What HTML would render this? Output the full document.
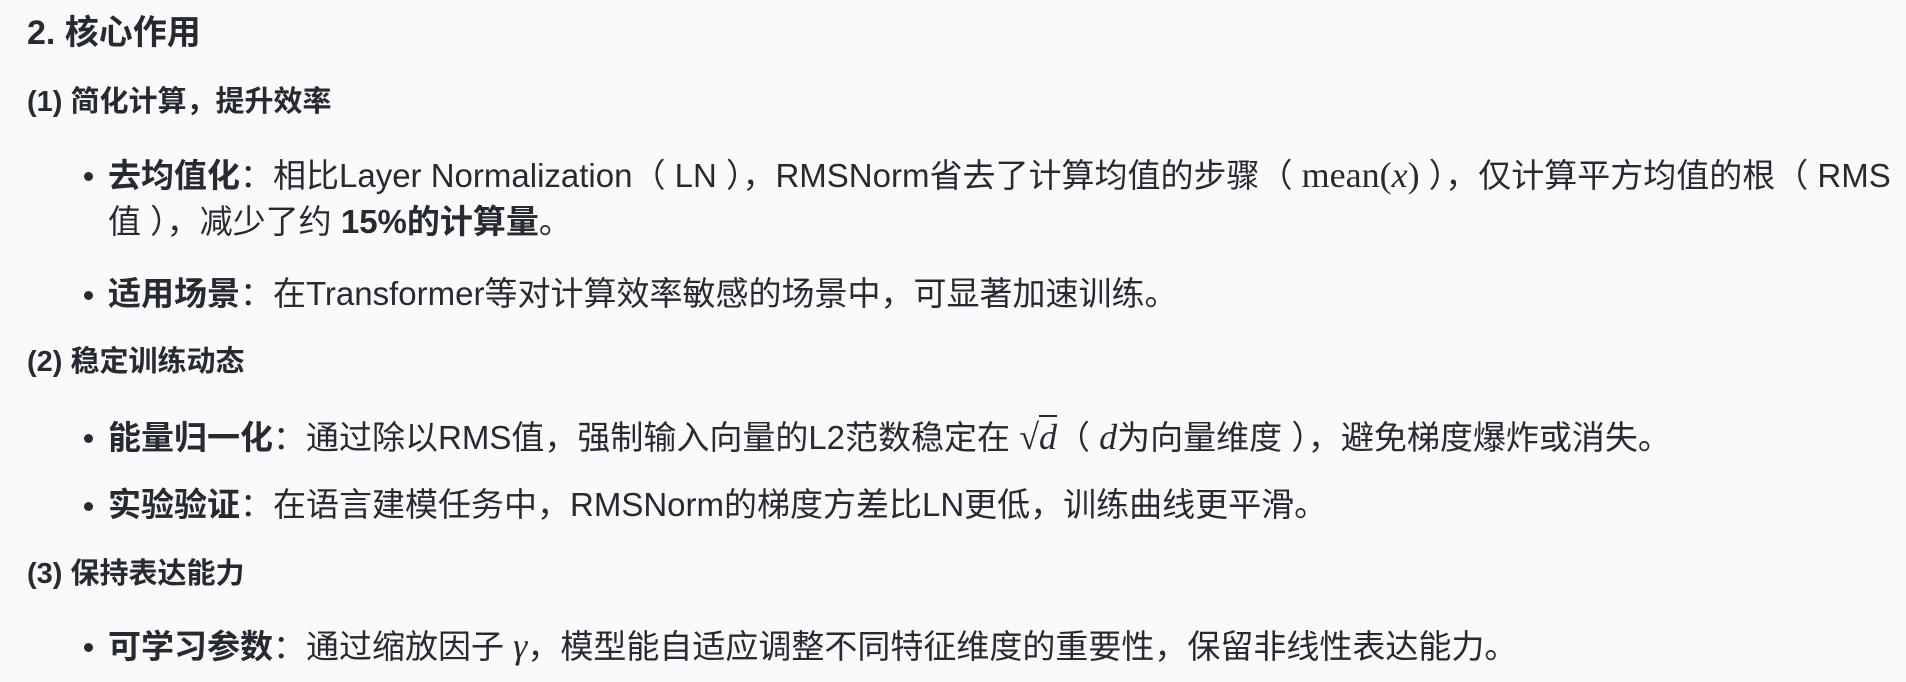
<!DOCTYPE html>
<html><head><meta charset="utf-8"><style>
body{margin:0;width:1906px;height:682px;background:#fafafa;overflow:hidden;
font-family:"Liberation Sans","Noto Sans CJK SC",sans-serif;color:#262a33;}
.l{position:absolute;white-space:nowrap;line-height:1;}
.h{left:27px;font-size:34px;font-weight:bold;}
.s{left:27px;font-size:29px;font-weight:bold;}
.b{left:108px;font-size:33px;}
.b::before{content:"";position:absolute;left:-24px;top:50%;width:9px;height:9px;margin-top:-3px;border-radius:50%;background:#262a33;}
.n::before{display:none}
b{font-weight:bold}
.m{font-family:"Liberation Serif","DejaVu Serif",serif;font-size:36px;}
.i{font-family:"Liberation Serif",serif;font-style:italic;font-size:36px;}
</style></head><body>
<div class="l h" style="top:16px">2. 核心作用</div>
<div class="l s" style="top:88px">(1) 简化计算，提升效率</div>
<div class="l b" style="top:157px"><b>去均值化</b>：相比Layer Normalization（ LN ），RMSNorm省去了计算均值的步骤（ <span class="m">mean(<i>x</i>)</span> ），仅计算平方均值的根（ RMS</div>
<div class="l b n" style="top:205px">值 ），减少了约 <b>15%的计算量</b>。</div>
<div class="l b" style="top:277px"><b>适用场景</b>：在Transformer等对计算效率敏感的场景中，可显著加速训练。</div>
<div class="l s" style="top:348px">(2) 稳定训练动态</div>
<div class="l b" style="top:419px"><b>能量归一化</b>：通过除以RMS值，强制输入向量的L2范数稳定在 <span class="m">√<span style="border-top:2px solid #262a33;font-style:italic">d</span></span>（ <span class="i">d</span>为向量维度 ），避免梯度爆炸或消失。</div>
<div class="l b" style="top:488px"><b>实验验证</b>：在语言建模任务中，RMSNorm的梯度方差比LN更低，训练曲线更平滑。</div>
<div class="l s" style="top:560px">(3) 保持表达能力</div>
<div class="l b" style="top:628px"><b>可学习参数</b>：通过缩放因子 <span class="i">γ</span>，模型能自适应调整不同特征维度的重要性，保留非线性表达能力。</div>
</body></html>
